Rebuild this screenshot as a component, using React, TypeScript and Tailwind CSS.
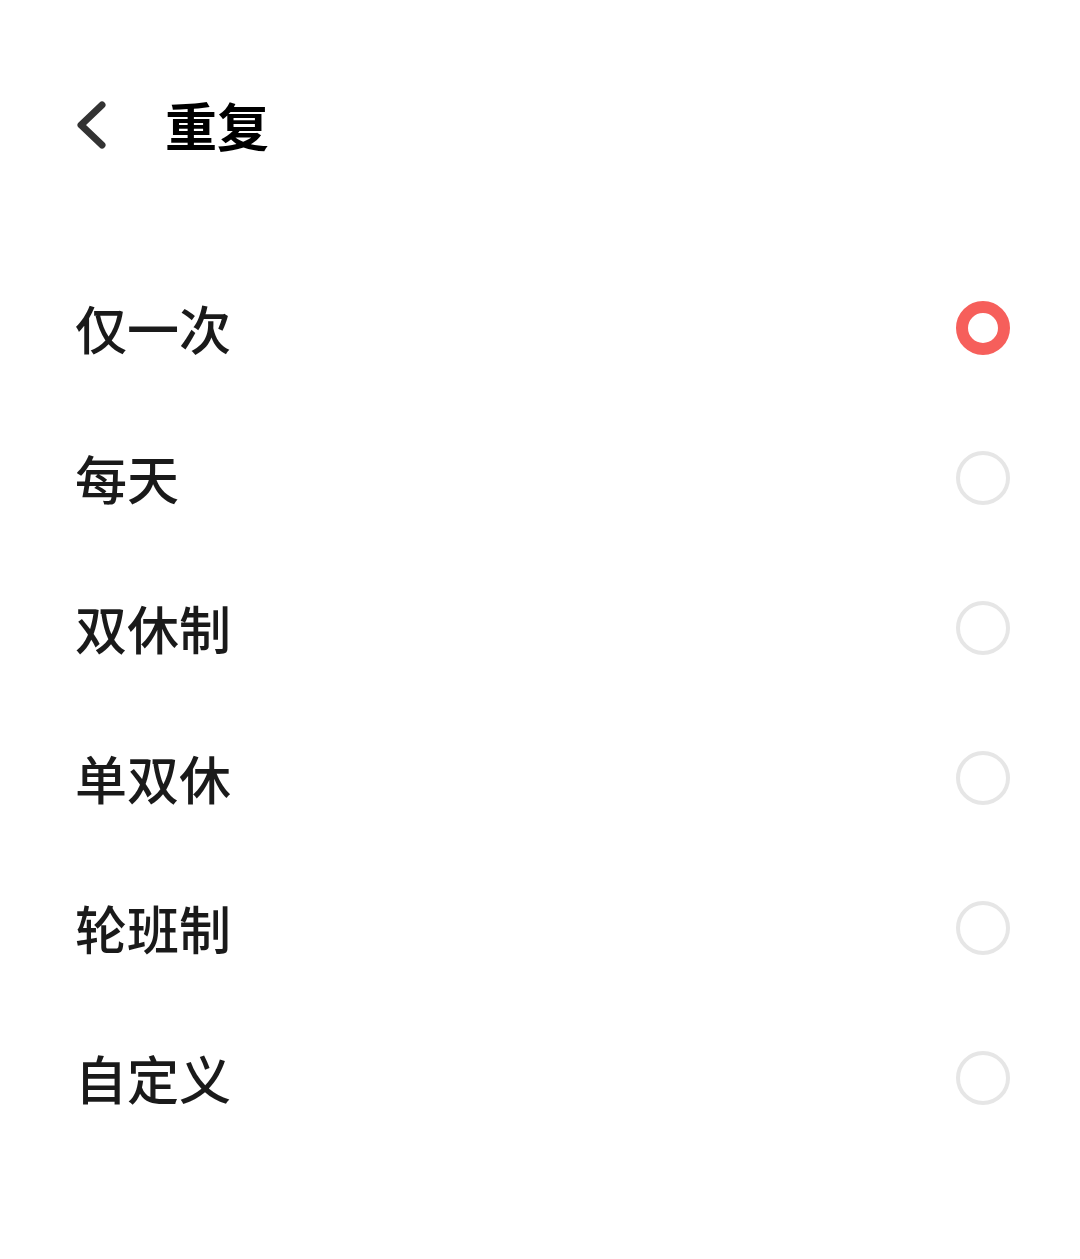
import { useState } from "react";

const OPTIONS = ["仅一次", "每天", "双休制", "单双休", "轮班制", "自定义"];

const font = { fontFamily: '"Noto Sans CJK SC", "Noto Sans", sans-serif' };

export default function App() {
  const [selected, setSelected] = useState(0);

  return (
    <div className="min-h-screen w-[1080px] bg-white text-[#1a1a1a]" style={font}>
      {/* ── Header ── */}
      <div className="h-[250px] flex items-center pl-[76px]">
        <button className="w-[34px] h-[48px] flex items-center">
          <svg width="30" height="48" viewBox="0 0 30 48">
            <polyline
              points="26,4 5,24 26,44"
              fill="none"
              stroke="#333333"
              strokeWidth="7"
              strokeLinecap="round"
              strokeLinejoin="round"
            />
          </svg>
        </button>
        <h1 className="ml-[55px] text-[52px] leading-none font-semibold text-black">重复</h1>
      </div>

      {/* ── Options ── */}
      <ul className="mt-[3px]">
        {OPTIONS.map((label, i) => (
          <li
            key={label}
            onClick={() => setSelected(i)}
            className="h-[150px] flex items-center justify-between pl-[75px] pr-[70px] cursor-pointer"
          >
            <span className="text-[52px] leading-none font-medium">{label}</span>
            {selected === i ? (
              <span className="w-[54px] h-[54px] rounded-full border-[12px] border-[#f65f5b]" />
            ) : (
              <span className="w-[54px] h-[54px] rounded-full border-[4px] border-[#e6e6e6]" />
            )}
          </li>
        ))}
      </ul>
    </div>
  );
}
